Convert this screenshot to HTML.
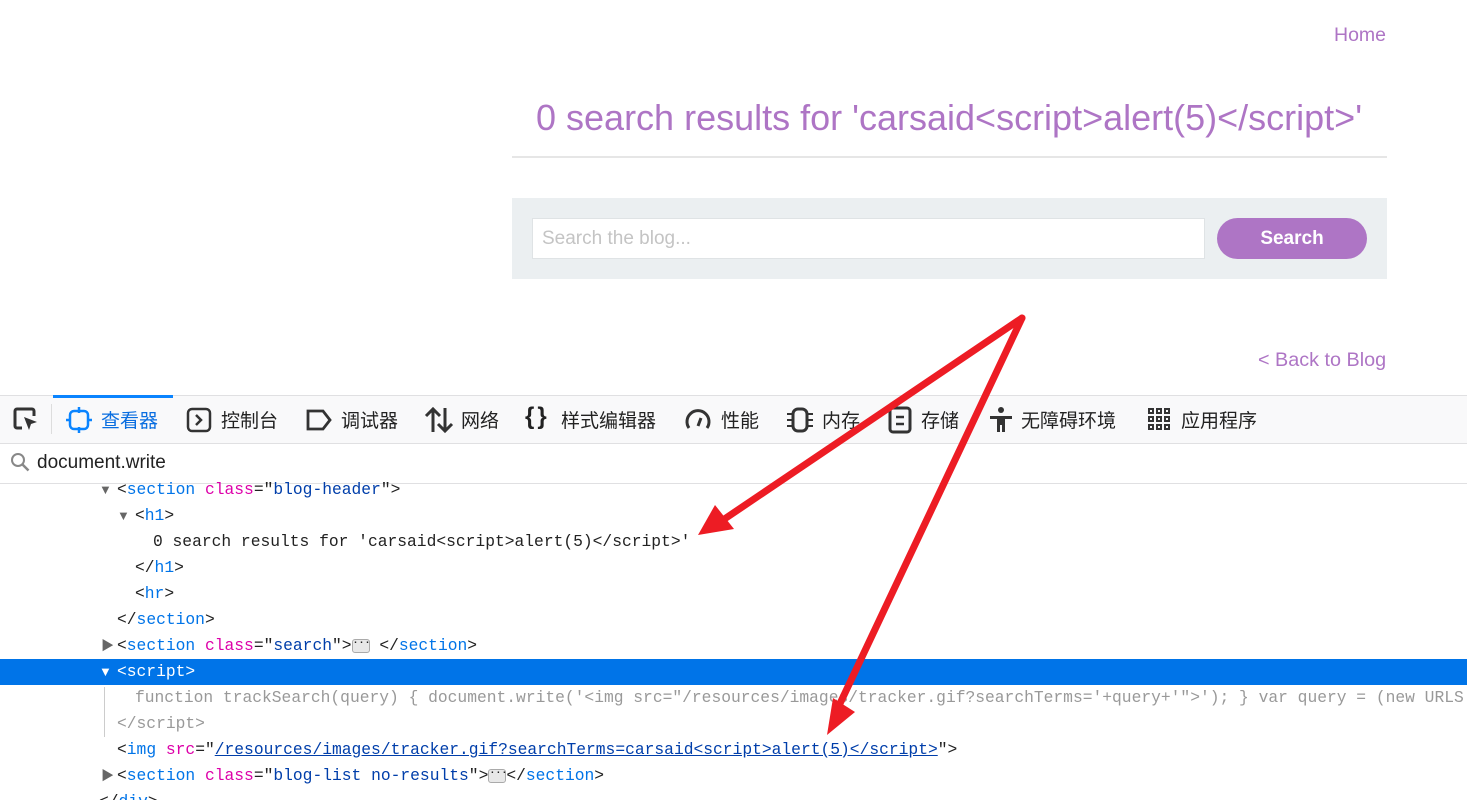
<!DOCTYPE html>
<html><head><meta charset="utf-8"><style>
body{margin:0;width:1467px;height:800px;overflow:hidden;background:#fff;font-family:"Liberation Sans","Noto Sans CJK SC",sans-serif;position:relative}
.a{position:absolute}
.l{position:absolute;font-family:"Liberation Mono","DejaVu Sans Mono",monospace;font-size:16.3px;white-space:pre;line-height:26px;color:#222}
.t{color:#0074e8}.at{color:#dd00a9}.v{color:#003eaa}
.tri{position:absolute;font-size:13px;line-height:26px;color:#666}
.tab{position:absolute;top:406px;font-size:19px;color:#222;display:flex;align-items:center}
.dots{display:inline-block;width:16px;height:12px;border:1px solid #aaa;border-radius:3px;background:#e8e8e8;font-size:10px;line-height:8px;vertical-align:middle;text-align:center;color:#222;font-weight:bold}
</style></head><body>
<div class="a" style="left:1334px;top:24px;font-size:19.5px;color:#ae75c5">Home</div>
<div class="a" style="left:536px;top:97px;font-size:36px;color:#ae75c5">0 search results for 'carsaid&lt;script&gt;alert(5)&lt;/script&gt;'</div>
<div class="a" style="left:512px;top:156px;width:875px;height:2px;background:#e6e6e6"></div>
<div class="a" style="left:512px;top:198px;width:875px;height:81px;background:#ebeff1"></div>
<div class="a" style="left:532px;top:218px;width:671px;height:39px;background:#fff;border:1px solid #dfe3e5;color:#c4c4c4;font-size:19px;line-height:40px;text-indent:9px">Search the blog...</div>
<div class="a" style="left:1217px;top:218px;width:150px;height:41px;border-radius:21px;background:#ae75c5;color:#fff;font-weight:bold;font-size:19px;line-height:41px;text-align:center">Search</div>
<div class="a" style="left:1258px;top:349px;font-size:19.8px;color:#ae75c5">&lt; Back to Blog</div>

<div class="a" style="left:0;top:395px;width:1467px;height:47px;background:#f9f9fa;border-top:1px solid #e0e0e2;border-bottom:1px solid #e0e0e2"></div>
<div class="a" style="left:53px;top:395px;width:120px;height:3px;background:#0a84ff"></div>
<div class="a" style="left:51px;top:404px;width:1px;height:30px;background:#ddd"></div>
<svg class="a" style="left:12px;top:406px" width="28" height="28" viewBox="0 0 28 28"><path d="M10 22H5a2 2 0 0 1-2-2V5a2 2 0 0 1 2-2h15a2 2 0 0 1 2 2v5" fill="none" stroke="#333" stroke-width="3"/><path d="M12 11l13 5-6 2-2 6z" fill="#333"/></svg>
<svg class="a" style="left:66px;top:406px" width="26" height="28"><rect x="4" y="5" width="18" height="18" rx="4" fill="none" stroke="#0a84ff" stroke-width="2.5"/><path d="M13 1v6M13 21v6M0 14h5M21 14h5" stroke="#0a84ff" stroke-width="2.5"/></svg>
<div class="tab" style="left:101px;color:#0a6ee0">查看器</div>
<svg class="a" style="left:186px;top:407px" width="26" height="26"><rect x="2" y="2" width="22" height="22" rx="4" fill="none" stroke="#333" stroke-width="2.5"/><path d="M10 8l5 5-5 5" fill="none" stroke="#333" stroke-width="2.5"/></svg>
<div class="tab" style="left:221px">控制台</div>
<svg class="a" style="left:305px;top:408px" width="28" height="24"><path d="M3 3h15l7 9-7 9H3z" fill="none" stroke="#333" stroke-width="2.8"/></svg>
<div class="tab" style="left:341px">调试器</div>
<svg class="a" style="left:424px;top:406px" width="30" height="28" fill="none" stroke="#333" stroke-width="3"><path d="M9 26V3M2 10l7-7 7 7M21 2v23M14 18l7 7 7-7"/></svg>
<div class="tab" style="left:461px">网络</div>
<div class="tab" style="left:525px;font-size:24px;top:403px;font-weight:bold;letter-spacing:3px">{}</div>
<div class="tab" style="left:561px">样式编辑器</div>
<svg class="a" style="left:684px;top:406px" width="28" height="28"><path d="M5 22A11 11 0 1 1 23 22" fill="none" stroke="#333" stroke-width="3"/><path d="M14 20l3-8" stroke="#333" stroke-width="3"/></svg>
<div class="tab" style="left:721px">性能</div>
<svg class="a" style="left:786px;top:406px" width="28" height="28"><rect x="7" y="3" width="14" height="22" rx="5" fill="none" stroke="#333" stroke-width="3"/><path d="M1 8h5M1 14h5M1 20h5M22 8h5M22 14h5M22 20h5" stroke="#333" stroke-width="2"/></svg>
<div class="tab" style="left:822px">内存</div>
<svg class="a" style="left:887px;top:406px" width="26" height="28"><rect x="3" y="2" width="20" height="24" rx="3" fill="none" stroke="#333" stroke-width="3"/><path d="M9 11h8M9 18h8" stroke="#333" stroke-width="2.5"/></svg>
<div class="tab" style="left:921px">存储</div>
<svg class="a" style="left:988px;top:406px" width="26" height="28"><circle cx="13" cy="4" r="3" fill="#333"/><path d="M2 10h22v3h-7v13h-3v-7h-2v7H9V13H2z" fill="#333"/></svg>
<div class="tab" style="left:1021px">无障碍环境</div>
<svg class="a" style="left:1147px;top:407px" width="24" height="24" fill="none" stroke="#333" stroke-width="2"><rect x="2" y="2" width="4" height="4"/><rect x="10" y="2" width="4" height="4"/><rect x="18" y="2" width="4" height="4"/><rect x="2" y="10" width="4" height="4"/><rect x="10" y="10" width="4" height="4"/><rect x="18" y="10" width="4" height="4"/><rect x="2" y="18" width="4" height="4"/><rect x="10" y="18" width="4" height="4"/><rect x="18" y="18" width="4" height="4"/></svg>
<div class="tab" style="left:1181px">应用程序</div>

<svg class="a" style="left:10px;top:452px" width="22" height="22"><circle cx="8" cy="8" r="6" fill="none" stroke="#888" stroke-width="2"/><path d="M12.5 12.5l6 6" stroke="#888" stroke-width="2.5"/></svg>
<div class="a" style="left:37px;top:452px;font-size:19px;color:#222">document.write</div>
<div class="a" style="left:0;top:483px;width:1467px;height:1px;background:#e0e0e2"></div>

<div class="a" style="left:0;top:659px;width:1467px;height:26px;background:#0074e8"></div>
<div class="a" style="left:104px;top:687px;width:1px;height:50px;background:#ccc"></div>

<div class="tri" style="left:99px;top:477px">▼</div>
<div class="l" style="left:117px;top:477px">&lt;<span class="t">section</span> <span class="at">class</span>="<span class="v">blog-header</span>"&gt;</div>
<div class="tri" style="left:117px;top:503px">▼</div>
<div class="l" style="left:135px;top:503px">&lt;<span class="t">h1</span>&gt;</div>
<div class="l" style="left:153px;top:529px">0 search results for 'carsaid&lt;script&gt;alert(5)&lt;/script&gt;'</div>
<div class="l" style="left:135px;top:555px">&lt;/<span class="t">h1</span>&gt;</div>
<div class="l" style="left:135px;top:581px">&lt;<span class="t">hr</span>&gt;</div>
<div class="l" style="left:117px;top:607px">&lt;/<span class="t">section</span>&gt;</div>
<div class="tri" style="left:101px;top:633px">▶</div>
<div class="l" style="left:117px;top:633px">&lt;<span class="t">section</span> <span class="at">class</span>="<span class="v">search</span>"&gt;<span class="dots">···</span> &lt;/<span class="t">section</span>&gt;</div>
<div class="tri" style="left:99px;top:659px;color:#fff">▼</div>
<div class="l" style="left:117px;top:659px;color:#fff">&lt;script&gt;</div>
<div class="l" style="left:135px;top:685px;width:1332px;overflow:hidden;color:#999">function trackSearch(query) { document.write('&lt;img src="/resources/images/tracker.gif?searchTerms='+query+'"&gt;'); } var query = (new URLS</div>
<div class="l" style="left:117px;top:711px;color:#999">&lt;/script&gt;</div>
<div class="l" style="left:117px;top:737px">&lt;<span class="t">img</span> <span class="at">src</span>="<span class="v" style="text-decoration:underline">/resources/images/tracker.gif?searchTerms=carsaid&lt;script&gt;alert(5)&lt;/script&gt;</span>"&gt;</div>
<div class="tri" style="left:101px;top:763px">▶</div>
<div class="l" style="left:117px;top:763px">&lt;<span class="t">section</span> <span class="at">class</span>="<span class="v">blog-list no-results</span>"&gt;<span class="dots">···</span>&lt;/<span class="t">section</span>&gt;</div>
<div class="l" style="left:99px;top:789px;height:11px;overflow:hidden">&lt;/<span class="t">div</span>&gt;</div>

<svg class="a" style="left:0;top:0" width="1467" height="800">
<path d="M1022 318L720 522" stroke="#ed1c24" stroke-width="7" stroke-linecap="round"/>
<path d="M698 535L715 505L734 529Z" fill="#ed1c24"/>
<path d="M1022 318L836 712" stroke="#ed1c24" stroke-width="7" stroke-linecap="round"/>
<path d="M827 735L833 698L855 712Z" fill="#ed1c24"/>
</svg>
</body></html>
